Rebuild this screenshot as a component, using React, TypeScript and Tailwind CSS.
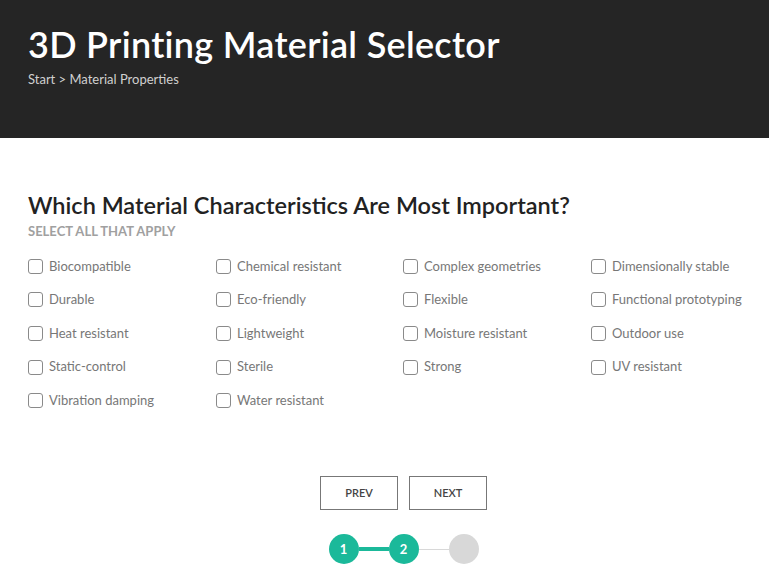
const options = [
  "Biocompatible",
  "Chemical resistant",
  "Complex geometries",
  "Dimensionally stable",
  "Durable",
  "Eco-friendly",
  "Flexible",
  "Functional prototyping",
  "Heat resistant",
  "Lightweight",
  "Moisture resistant",
  "Outdoor use",
  "Static-control",
  "Sterile",
  "Strong",
  "UV resistant",
  "Vibration damping",
  "Water resistant",
];

export default function App() {
  return (
    <div className="min-h-[584px] bg-white" style={{ fontFamily: "Lato, 'Open Sans', sans-serif" }}>
      <header className="h-[138px] bg-[#252525] px-[28px] pt-[23px]">
        <h1 className="text-[36px] font-semibold leading-[42px] tracking-[0.3px] text-white">3D Printing Material Selector</h1>
        <p className="mt-[5px] text-[13px] text-[#d0d0d0]">Start &gt; Material Properties</p>
      </header>

      <main className="px-[28px] pt-[52px]">
        <h2 className="text-[23.5px] font-semibold leading-[30px] text-[#222]">
          Which Material Characteristics Are Most Important?
        </h2>
        <p className="mt-[2px] text-[13px] font-bold uppercase text-[#a0a0a0]">Select all that apply</p>

        <div className="mt-[8px] grid grid-cols-[188px_187px_188px_1fr]">
          {options.map((o) => (
            <label key={o} className="flex h-[33.6px] items-center gap-[6px] whitespace-nowrap">
              <span className="h-[15px] w-[15px] shrink-0 rounded-[3px] border border-[#8a8a8a] bg-white" />
              <span className="text-[13px] text-[#777]">{o}</span>
            </label>
          ))}
        </div>

        <div className="mt-[59px] flex justify-center gap-[11px] pl-[38px]">
          <button className="h-[34px] w-[78px] border border-[#777] text-[11px] font-semibold text-[#444]">PREV</button>
          <button className="h-[34px] w-[78px] border border-[#777] text-[11px] font-semibold text-[#444]">NEXT</button>
        </div>

        <div className="mt-[24px] flex items-center justify-center pl-[38px]">
          <div className="flex h-[30px] w-[30px] items-center justify-center rounded-full bg-[#1bb99a] text-[13px] font-bold text-white">1</div>
          <div className="h-[4px] w-[30px] bg-[#1bb99a]" />
          <div className="flex h-[30px] w-[30px] items-center justify-center rounded-full bg-[#1bb99a] text-[13px] font-bold text-white">2</div>
          <div className="h-[1px] w-[30px] bg-[#d8d8d8]" />
          <div className="h-[30px] w-[30px] rounded-full bg-[#d8d8d8]" />
        </div>
      </main>
    </div>
  );
}
